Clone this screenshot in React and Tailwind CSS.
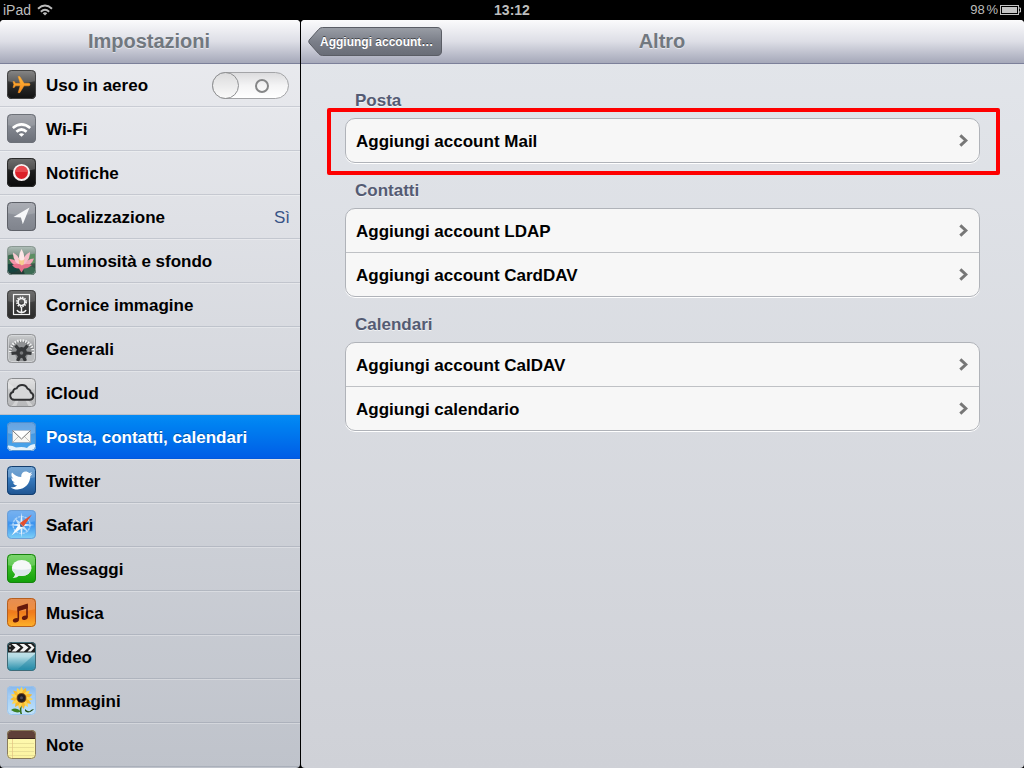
import React, { useState } from 'react';
import clsx from 'clsx';
import { FaTwitter } from 'react-icons/fa';

// Rounded 29x29 tile with the glossy top half shared by all the icons
const Tile = ({ id, from, to, mid, stroke = '#555', gloss = 0.25, children }) => (
  <svg width="29" height="29" viewBox="0 0 29 29" className="shrink-0">
    <defs>
      <linearGradient id={`${id}-bg`} x1="0" y1="0" x2="0" y2="1">
        <stop offset="0" stopColor={from} />
        {mid && <stop offset="0.5" stopColor={mid} />}
        <stop offset="1" stopColor={to} />
      </linearGradient>
      <clipPath id={`${id}-clip`}>
        <rect width="29" height="29" rx="4.5" />
      </clipPath>
    </defs>
    <g clipPath={`url(#${id}-clip)`}>
      <rect width="29" height="29" fill={`url(#${id}-bg)`} />
      <path d="M0 0H29V11Q14.5 15 0 11Z" fill="#fff" opacity={gloss} />
      {children}
    </g>
    <rect x="0.5" y="0.5" width="28" height="28" rx="4" fill="none" stroke={stroke} />
  </svg>
);

const AirplaneIcon = () => (
  <Tile id="air" from="#6a6a6a" mid="#2b2b2b" to="#111" stroke="#444" gloss={0.2}>
    <defs>
      <linearGradient id="air-o" x1="0" y1="0" x2="1" y2="0">
        <stop offset="0" stopColor="#ffb93c" />
        <stop offset="1" stopColor="#f8891a" />
      </linearGradient>
    </defs>
    <path
      transform="translate(24.7 4.8) rotate(90) scale(0.85)"
      d="M21 16v-2l-8-5V3.5c0-.83-.67-1.5-1.5-1.5S10 2.67 10 3.500V9l-8 5v2l8-2.500V19l-2 1.500V22l3.500-1 3.500 1v-1.500L13 19v-5.500l8 2.500z"
      fill="url(#air-o)"
      stroke="#f99b2a"
      strokeWidth="0.6"
    />
  </Tile>
);

const WifiIcon = () => (
  <Tile id="wifi" from="#989ba2" mid="#80848d" to="#6a6e77" stroke="#6d7178" gloss={0.12}>
    <g fill="none" stroke="#fff" strokeWidth="2.7">
      <path d="M5.800 14Q14.500 6.600 23.200 14" />
      <path d="M9.400 17.800Q14.500 13.200 19.600 17.800" />
    </g>
    <path d="M11.800 20.300Q14.500 18 17.200 20.300L14.500 22.800Z" fill="#fff" />
  </Tile>
);

const NotificationIcon = () => (
  <Tile id="noti" from="#4a4a4a" mid="#1c1c1c" to="#0b0b0b" stroke="#2c2c2c" gloss={0.2}>
    <circle cx="14.500" cy="14.500" r="7.500" fill="#dc1f28" stroke="#f6efef" strokeWidth="2.200" />
    <path d="M8.300 14A6.200 6.200 0 0 1 20.700 14Z" fill="#e9484e" />
  </Tile>
);

const LocationIcon = () => (
  <Tile id="loc" from="#9fa2aa" mid="#8b8f98" to="#7f838c" stroke="#5e6168" gloss={0.14}>
    <path d="M22.500 5.500L6.500 15L13.900 15.400L15.800 22.300Z" fill="#f7f8fa" />
  </Tile>
);

const LotusIcon = () => (
  <Tile id="lotus" from="#a9bab3" mid="#4c6556" to="#1b3531" stroke="#8a9893" gloss={0.12}>
    <path d="M0 10Q6 6 12 12L10 17L0 18Z" fill="#3c6b4e" />
    <path d="M29 8Q22 7 18 13L21 18L29 17Z" fill="#5c8f62" />
    <path d="M0 18.500Q8 16 14 22Q8 28 0 26Z" fill="#17443f" />
    <path d="M16 22Q24 18 29 23V29H18Z" fill="#3c6b53" />
    <path d="M2 13Q9 12.500 13.500 20Q6 21 2 13Z" fill="#f295a9" />
    <path d="M27 12.500Q20 12.500 15.500 20Q24 21 27 12.500Z" fill="#f4a6b7" />
    <path d="M6 6.500Q14 11 14.500 20Q6 17 6 6.500Z" fill="#f9c9d0" />
    <path d="M23 6Q15 10 14.500 20Q23 16 23 6Z" fill="#f7bcc8" />
    <path d="M14.500 3Q20 12 14.700 21Q9.500 12 14.500 3Z" fill="#fde6e7" />
    <path d="M11.500 13Q14.500 16 17.500 13L16.500 19H12.500Z" fill="#f3c06a" opacity="0.700" />
    <path d="M5 19Q12 16.500 15 19.500Q20 17 25 19Q20 23 17 22.500L14.500 26.500L12 22.500Q8 23 5 19Z" fill="#e5708a" />
  </Tile>
);

const FrameIcon = () => (
  <Tile id="frame" from="#5c5c5c" mid="#3b3b3b" to="#2a2a2a" stroke="#444" gloss={0.12}>
    <rect x="6.500" y="4.500" width="16" height="20" fill="none" stroke="#f3f3f3" strokeWidth="1.200" />
    <circle cx="14.500" cy="12" r="4.200" fill="none" stroke="#f3f3f3" strokeWidth="2.600" strokeDasharray="1.300 0.900" />
    <circle cx="14.500" cy="12" r="3.400" fill="none" stroke="#f3f3f3" strokeWidth="1.500" />
    <path d="M14.500 17V23.500M14.500 22.500Q11 22.500 10 20M14.500 22.500Q18 22.500 19 20" fill="none" stroke="#f3f3f3" strokeWidth="1.400" />
  </Tile>
);

const GearsIcon = () => (
  <Tile id="gears" from="#c9cbcd" mid="#8b8d90" to="#b9bbbd" stroke="#939598" gloss={0.12}>
    <circle cx="14.500" cy="18" r="11.300" fill="#7a7c7e" stroke="#f1f2f2" strokeWidth="3" strokeDasharray="1.400 1.300" />
    <circle cx="14.500" cy="18" r="9.900" fill="#8e9092" />
    <path d="M2 19L8 20L11 29H2ZM27 19L21 20L18 29H27Z" fill="#b9bbbd" />
    <path
      d="M14.500 18.500L8.500 11.500M14.500 18.500L20.500 11.500M14.500 18.500L4.500 19.500M14.500 18.500L24.500 19.500M14.500 18.500L10.500 27M14.500 18.500L18.500 27"
      stroke="#36383a"
      strokeWidth="3.200"
    />
    <circle cx="14.500" cy="18.500" r="5.400" fill="#36383a" />
    <circle cx="14.500" cy="19" r="1.800" fill="#77797b" />
    <rect x="1.500" y="1.500" width="26" height="26" rx="3" fill="none" stroke="#dcdddf" opacity="0.700" />
  </Tile>
);

const CloudIcon = () => (
  <Tile id="cloud" from="#dededf" mid="#c4c5c6" to="#b6b7b9" stroke="#898b8e" gloss={0.15}>
    <path d="M14.500 14.500L0 4V10ZM14.500 14.500L22 29H27ZM14.500 14.500L4 29H9Z" fill="#efeff0" opacity="0.450" />
    <path
      d="M7.300 21.800A4 4 0 0 1 6 14A3.900 3.900 0 0 1 9.700 10.400A5.900 5.900 0 0 1 20.500 10.600A4.800 4.800 0 0 1 23.800 14.600A3.700 3.700 0 0 1 22.700 21.800Z"
      fill="#d6d7d8"
      stroke="#303133"
      strokeWidth="1.900"
    />
  </Tile>
);

const MailIcon = () => (
  <Tile id="mail" from="#3d88d6" mid="#469ce6" to="#4aa5ea" stroke="#4c8fd0" gloss={0.22}>
    <path d="M0 23.500Q5 23 9 25.500Q16 24.500 20 26Q23 22 29 22V29H0Z" fill="#fff" opacity="0.850" />
    <rect x="5.300" y="8.300" width="18.400" height="12.400" fill="#f7f6f3" stroke="#6f8db0" strokeWidth="0.600" />
    <path d="M5.500 20.500L12 14M23.500 20.500L17 14" stroke="#b3b3b3" strokeWidth="0.800" />
    <path d="M5.800 8.800L14.500 17L23.200 8.800" fill="#fff" stroke="#777" strokeWidth="1" />
  </Tile>
);

const TwitterIcon = () => (
  <Tile id="tw" from="#5492cb" mid="#3577ba" to="#1e5390" stroke="#143e6e" gloss={0.2}>
    <FaTwitter x="3.500" y="3.500" size={22} color="#fff" />
  </Tile>
);

const SafariIcon = () => (
  <Tile id="safari" from="#5fa4ee" mid="#3c93ee" to="#7fd2f7" stroke="#6c9fd6" gloss={0.15}>
    <circle cx="14.500" cy="15" r="8.500" fill="none" stroke="#a9d2f8" strokeWidth="1.300" strokeDasharray="2.500 0.800" />
    <path d="M14.500 2.500L15.800 13.700L27.500 15L15.800 16.300L14.500 27.500L13.200 16.300L1.500 15L13.200 13.700Z" fill="#e2f1fc" />
    <path d="M7.500 8L14.500 13L21.500 22L12.500 17Z" fill="#c5e0f8" />
    <path d="M25 4.500L16.400 16.700L12.600 13.200Z" fill="#e5502f" />
    <path d="M4.500 25.500L16.400 16.700L12.600 13.200Z" fill="#f6fafd" />
    <path d="M12.600 13.200L16.400 16.700L13.500 17Z" fill="#3e5f8f" />
  </Tile>
);

const MessagesIcon = () => (
  <Tile id="msg" from="#5ccc4b" mid="#35b823" to="#10a008" stroke="#18810f" gloss={0.2}>
    <ellipse cx="14.700" cy="14" rx="9.800" ry="8" fill="#f5f8f8" />
    <path d="M8 18Q8.500 22 5.500 24Q10.500 24 13 20.500Z" fill="#e6edee" />
    <path d="M5 14.500Q14.500 17 24.400 14.500Q23.500 21 14.700 22Q6 21 5 14.500Z" fill="#dde7ea" />
  </Tile>
);

const MusicIcon = () => (
  <Tile id="music" from="#e07a35" mid="#f07c1c" to="#ffb32a" stroke="#b45f20" gloss={0.15}>
    <path d="M11.300 9V21.600M20 6.500V19.300" fill="none" stroke="#66190b" strokeWidth="1.600" />
    <path d="M10.500 8.800L20.800 5.600V10.200L10.500 13.400Z" fill="#66190b" />
    <ellipse cx="8.900" cy="22.200" rx="3.100" ry="2.100" transform="rotate(-18 8.9 22.2)" fill="#66190b" />
    <ellipse cx="17.800" cy="19.800" rx="3" ry="2.100" transform="rotate(-18 17.8 19.8)" fill="#66190b" />
  </Tile>
);

const VideoIcon = () => (
  <Tile id="video" from="#e8f6f8" mid="#b4dbe4" to="#1f8ba8" stroke="#3f6b78" gloss={0}>
    <path d="M29 11L11 27Q20 29 29 26Z" fill="#1f86a5" opacity="0.450" />
    <rect width="29" height="10.500" fill="#1e1e1e" />
    <g fill="#f6f6f6">
      <path d="M4.500 2H9L13.500 5.600L9 9.400H4.500L8.500 5.600Z" />
      <path d="M12.500 2H17L21.500 5.600L17 9.400H12.500L16.500 5.600Z" />
      <path d="M20.500 2H24L27.500 5.600L24 9.400H20.500L24.500 5.600Z" />
      <circle cx="3" cy="4" r="0.800" />
      <circle cx="3" cy="8" r="0.800" />
    </g>
  </Tile>
);

const PETALS = [0, 24, 48, 72, 96, 120, 144, 168, 192, 216, 240, 264, 288, 312, 336];

const SunflowerIcon = () => (
  <Tile id="sun" from="#79b0ec" mid="#a9d2f7" to="#c2e4fa" stroke="#9cc3ea" gloss={0.1}>
    <path d="M14 20Q13 25 14.500 29" fill="none" stroke="#326d1b" strokeWidth="1.600" />
    <path d="M14 25.500Q9 20.500 4 24Q9 28 14 25.500Z" fill="#3c8123" />
    <path d="M18 25Q21 28.500 27 23.500Q25 22.500 23 25Q21 26 18 23Z" fill="#224f17" />
    <circle cx="14.500" cy="12" r="8" fill="#f5a81d" />
    {PETALS.map((deg) => (
      <path
        key={deg}
        d="M14.500 0.800Q18 5.500 14.500 12Q11 5.500 14.500 0.800Z"
        transform={`rotate(${deg} 14.5 12)`}
        fill={deg % 48 ? '#f9bb2b' : '#fdd450'}
      />
    ))}
    <circle cx="14.500" cy="12" r="4.900" fill="#7a4716" />
    <circle cx="14.500" cy="12" r="3.900" fill="#231c20" />
    <circle cx="14.500" cy="11.800" r="1.500" fill="#4c4a58" />
  </Tile>
);

const NoteIcon = () => (
  <Tile id="note" from="#fffbb4" to="#fbf3a0" stroke="#8a7d5e" gloss={0}>
    <rect width="29" height="8.500" fill="#5f4038" />
    <path d="M0 8.500H29" stroke="#3b2521" />
    <path d="M2 13.500H27M2 17.500H27M2 21.500H27M2 25.500H27" stroke="#e3da93" strokeWidth="0.800" />
    <path d="M5.500 9V29" stroke="#e3c283" strokeWidth="0.700" />
  </Tile>
);

const MENU = [
  { id: 'airplane', label: 'Uso in aereo', Icon: AirplaneIcon, toggle: true },
  { id: 'wifi', label: 'Wi-Fi', Icon: WifiIcon },
  { id: 'notifications', label: 'Notifiche', Icon: NotificationIcon },
  { id: 'location', label: 'Localizzazione', Icon: LocationIcon, value: 'Sì' },
  { id: 'brightness', label: 'Luminosità e sfondo', Icon: LotusIcon },
  { id: 'frame', label: 'Cornice immagine', Icon: FrameIcon },
  { id: 'general', label: 'Generali', Icon: GearsIcon },
  { id: 'icloud', label: 'iCloud', Icon: CloudIcon },
  { id: 'mail', label: 'Posta, contatti, calendari', Icon: MailIcon },
  { id: 'twitter', label: 'Twitter', Icon: TwitterIcon },
  { id: 'safari', label: 'Safari', Icon: SafariIcon },
  { id: 'messages', label: 'Messaggi', Icon: MessagesIcon },
  { id: 'music', label: 'Musica', Icon: MusicIcon },
  { id: 'video', label: 'Video', Icon: VideoIcon },
  { id: 'photos', label: 'Immagini', Icon: SunflowerIcon },
  { id: 'notes', label: 'Note', Icon: NoteIcon },
];

const SECTIONS = [
  { title: 'Posta', items: ['Aggiungi account Mail'], highlighted: true },
  { title: 'Contatti', items: ['Aggiungi account LDAP', 'Aggiungi account CardDAV'] },
  { title: 'Calendari', items: ['Aggiungi account CalDAV', 'Aggiungi calendario'] },
];

const StatusBar = () => (
  <div className="grid h-5 shrink-0 grid-cols-3 items-center bg-black pr-[3px] pl-[3px] text-[14px] leading-5 text-[#bdbdbd]">
    <div className="flex items-center gap-1.5">
      <span className="-mt-px">iPad</span>
      <svg width="16" height="12" viewBox="0 0 16 12">
        <g fill="none" stroke="#bdbdbd" strokeWidth="1.9">
          <path d="M1 4.800Q8 -1.600 15 4.800" />
          <path d="M3.800 7.700Q8 3.900 12.200 7.700" />
        </g>
        <path d="M5.700 9.300Q8 7.400 10.300 9.300L8 11.600Z" fill="#bdbdbd" />
      </svg>
    </div>
    <div className="-mt-px text-center font-bold">13:12</div>
    <div className="flex items-center justify-end gap-[2px]">
      <span className="text-[13px] [word-spacing:-2px]">98 %</span>
      <svg width="21" height="10" viewBox="0 0 21 10">
        <rect x="0.500" y="0.500" width="18" height="9" fill="none" stroke="#c4c4c4" />
        <rect x="2" y="2" width="15" height="6" fill="#c4c4c4" />
        <path d="M19 3H20.500V7H19" fill="none" stroke="#c4c4c4" />
      </svg>
    </div>
  </div>
);

const HEADER =
  'flex h-11 shrink-0 items-center border-b border-[#7c809a] bg-linear-to-b from-[#fbfbfc] via-[#dddee6] to-[#a5a8b9]';
const HEADER_TITLE = 'pb-[2px] text-[20px] font-bold text-[#71787f] [text-shadow:0_1px_0_rgba(255,255,255,0.5)]';

const Toggle = ({ on, onChange }) => (
  <button
    type="button"
    role="switch"
    aria-checked={on}
    onClick={onChange}
    className="mt-[2px] flex h-[27px] w-[77px] items-center rounded-full border border-[#a3a4a7] bg-linear-to-b from-[#dcdcde] via-[#f4f4f5] to-white"
  >
    <span className="-ml-px size-[27px] rounded-full border border-[#8f9092] bg-linear-to-b from-[#dcdcdd] to-[#fafafa]" />
    <span className="ml-[16px] size-[14px] rounded-full border-2 border-[#858687]" />
  </button>
);

const Sidebar = ({ selected, onSelect }) => {
  const [airplane, setAirplane] = useState(false);

  return (
    <aside className="flex w-[300px] shrink-0 flex-col overflow-hidden rounded-t-[4px] rounded-b-[4px] bg-linear-to-b from-[#ebecf0] to-[#bfc3cb]">
      <div className={clsx(HEADER, 'justify-center')}>
        <h1 className={clsx(HEADER_TITLE, '-ml-[2px]')}>Impostazioni</h1>
      </div>
      <ul className="-mt-px">
        {MENU.map(({ id, label, Icon, toggle, value }, i) => (
          <li
            key={id}
            onClick={() => onSelect(id)}
            className={clsx(
              'flex h-11 items-center border-b pr-[11px] pl-[7px] text-[17px]',
              id === selected
                ? 'border-[#0259dc] bg-linear-to-b from-[#058bf4] to-[#015de6] text-white [text-shadow:0_-1px_0_rgba(0,0,0,0.3)]'
                : 'border-[#5a6478]/20 text-black',
              i > 0 && id !== selected && 'shadow-[inset_0_1px_0_rgba(255,255,255,0.3)]'
            )}
          >
            <Icon />
            <span className="ml-2.5 grow pt-[2px] font-bold">{label}</span>
            {toggle && <Toggle on={airplane} onChange={() => setAirplane((v) => !v)} />}
            {value && <span className="-mr-px pt-[2px] text-[#385487]">{value}</span>}
          </li>
        ))}
      </ul>
    </aside>
  );
};

const BackButton = ({ label }) => (
  <button
    type="button"
    className="relative ml-[7px] h-[29px] w-[134px] pl-[12px] text-left text-[12px] font-bold text-white [text-shadow:0_-1px_0_rgba(0,0,0,0.5)]"
  >
    <svg className="absolute inset-0" width="134" height="30" viewBox="0 0 134 30">
      <defs>
        <linearGradient id="back-bg" x1="0" y1="0" x2="0" y2="1">
          <stop offset="0" stopColor="#9a9ea6" />
          <stop offset="0.5" stopColor="#7b7f89" />
          <stop offset="1" stopColor="#686c76" />
        </linearGradient>
      </defs>
      <path
        d="M14.500 0.500H129Q133.500 0.500 133.500 5V24Q133.500 28.500 129 28.500H14.500Q12 28.500 10.500 26.500L1.200 16Q0.200 14.500 1.200 13L10.500 2.500Q12 0.500 14.500 0.500Z"
        fill="url(#back-bg)"
        stroke="#5a5d65"
      />
    </svg>
    <span className="relative">{label}</span>
  </button>
);

const Chevron = () => (
  <svg width="9" height="13" viewBox="0 0 9 13">
    <path d="M1.300 1.300L6.900 6.500L1.300 11.700" fill="none" stroke="#777" strokeWidth="3" />
  </svg>
);

const Section = ({ title, items, highlighted }) => (
  <section>
    <h3 className="ml-[10px] h-5 pt-px text-[17px] leading-5 font-bold text-[#545b73] [text-shadow:0_1px_0_rgba(255,255,255,0.6)]">
      {title}
    </h3>
    <div className="relative mt-2">
      <ul className="divide-y divide-[#bfc1c5] rounded-[10px] border border-[#b0b3b9] bg-[#f7f7f7] shadow-[0_1px_0_#fff]">
        {items.map((item) => (
          <li key={item} className="flex h-11 items-center justify-between pr-[11px] pl-[10px] last:h-[43px]">
            <span className="pt-[2px] text-[17px] font-bold text-black">{item}</span>
            <Chevron />
          </li>
        ))}
      </ul>
      {highlighted && (
        <div className="pointer-events-none absolute -top-[10px] -right-[20px] -bottom-[12px] -left-[18px] rounded-[2px] border-4 border-[#fe0000]" />
      )}
    </div>
  </section>
);

const App = () => {
  const [selected, setSelected] = useState('mail');

  return (
    <div className="flex h-screen w-full flex-col overflow-hidden bg-black font-['Liberation_Sans',Arial,sans-serif]">
      <StatusBar />
      <div className="flex min-h-0 grow gap-px">
        <Sidebar selected={selected} onSelect={setSelected} />
        <main className="flex grow flex-col overflow-hidden rounded-t-[4px] rounded-b-[4px] bg-linear-to-b from-[#e3e6eb] to-[#cfd1d7]">
          <div className={HEADER}>
            <BackButton label="Aggiungi account…" />
            <h2 className={clsx(HEADER_TITLE, 'grow pr-[142px] text-center')}>Altro</h2>
          </div>
          <div className="flex flex-col gap-[17px] pt-[26px] pr-[44px] pl-[44px]">
            {SECTIONS.map((section) => (
              <Section key={section.title} {...section} />
            ))}
          </div>
        </main>
      </div>
    </div>
  );
};

export default App;
